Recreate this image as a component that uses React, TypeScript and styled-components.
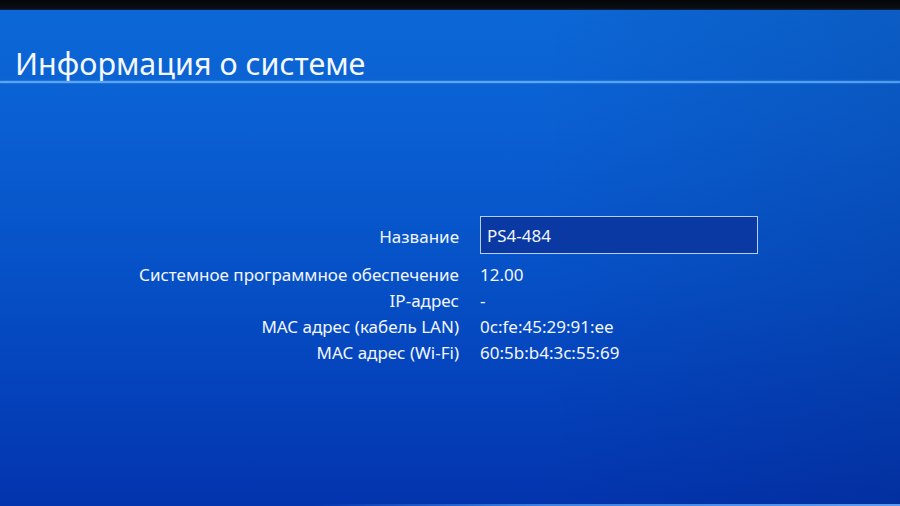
import { Fragment } from "react";
import styled, { createGlobalStyle } from "styled-components";

const Global = createGlobalStyle`
  html, body {
    margin: 0;
    padding: 0;
    background: #000;
  }
  #root {
    height: 100vh;
  }
`;

const Screen = styled.div`
  display: flex;
  flex-direction: column;
  width: 900px;
  height: 506px;
  overflow: hidden;
  font-family: "Noto Sans", "Open Sans", sans-serif;
  color: #f2f6ff;
  background:
    linear-gradient(90deg, rgba(0, 0, 0, 0) 60%, rgba(0, 10, 60, 0.12) 100%),
    linear-gradient(180deg, #0c68d6 0%, #0a5fd2 25%, #0650c6 55%, #0440b9 80%, #0334ae 100%);
`;

const Bezel = styled.div`
  height: 10px;
  flex-shrink: 0;
  background: linear-gradient(180deg, #050608 0%, #0a0d14 80%, #10223f 100%);
`;

const Header = styled.div`
  padding: 36px 0 0 15px;
  height: 35px;
`;

const Title = styled.h1`
  margin: 0;
  font-weight: 400;
  font-size: 30.5px;
  line-height: 35px;
  color: #f4f8ff;
`;

const Divider = styled.div`
  height: 2px;
  background: linear-gradient(90deg, #58a6f2 0%, #5aa8f4 60%, #4e9cee 100%);
  box-shadow: 0 0 2px rgba(120, 190, 255, 0.6);
`;

const Info = styled.div`
  display: grid;
  grid-template-columns: 459px 278px;
  grid-template-rows: 45px;
  grid-auto-rows: 26px;
  column-gap: 21px;
  margin-top: 133px;
  font-size: 17px;
`;

const Label = styled.div<{ $first?: boolean }>`
  display: flex;
  align-items: center;
  justify-content: flex-end;
  white-space: nowrap;
  margin-top: ${(p) => (p.$first ? "3px" : "0")};
  margin-bottom: ${(p) => (p.$first ? "7px" : "0")};
`;

const Value = styled.div`
  display: flex;
  align-items: center;
  white-space: nowrap;
`;

const NameBox = styled.div`
  display: flex;
  align-items: center;
  box-sizing: border-box;
  height: 38px;
  margin-bottom: 7px;
  padding: 0 5px 0 6px;
  border: 1.5px solid #b4cff2;
  background: #0a39a4;
`;

const Footer = styled.div`
  margin-top: auto;
  height: 2px;
  background: linear-gradient(90deg, rgba(80, 150, 240, 0) 35%, #3c80e0 60%, #5c9cf0 100%);
`;

const rows = [
  ["Системное программное обеспечение", "12.00"],
  ["IP-адрес", "-"],
  ["MAC адрес (кабель LAN)", "0c:fe:45:29:91:ee"],
  ["MAC адрес (Wi-Fi)", "60:5b:b4:3c:55:69"],
];

export default function App() {
  return (
    <>
      <Global />
      <Screen>
        <Bezel />
        <Header>
          <Title>Информация о системе</Title>
        </Header>
        <Divider />
        <Info>
          <Label $first>Название</Label>
          <NameBox>PS4-484</NameBox>
          {rows.map(([label, value]) => (
            <Fragment key={label}>
              <Label>{label}</Label>
              <Value>{value}</Value>
            </Fragment>
          ))}
        </Info>
        <Footer />
      </Screen>
    </>
  );
}
